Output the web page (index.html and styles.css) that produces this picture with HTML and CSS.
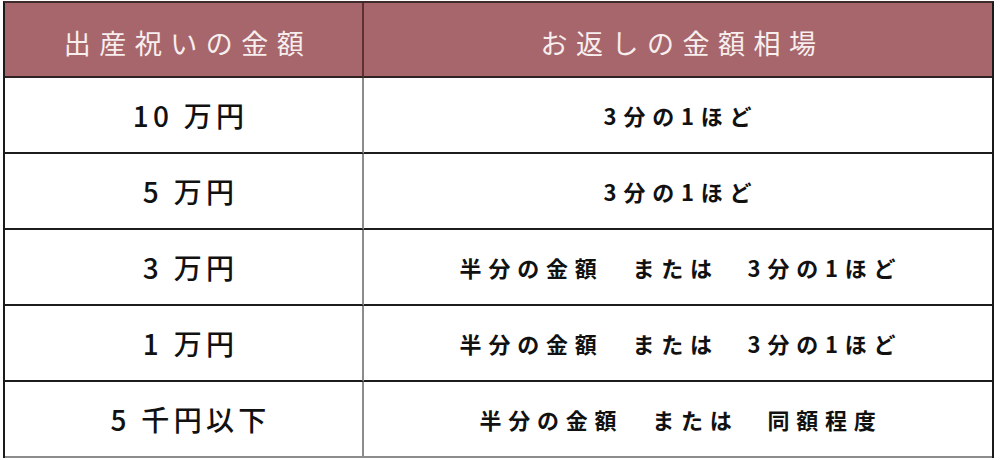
FILE: index.html
```html
<!DOCTYPE html>
<html lang="ja">
<head>
<meta charset="utf-8">
<link rel="stylesheet" href="styles.css">
</head>
<body>
<div class="table">
  <div class="cell head left">出産祝いの金額</div>
  <div class="cell head">お返しの金額相場</div>

  <div class="cell amount left">10 万円</div>
  <div class="cell ret">3分の1ほど</div>

  <div class="cell amount left">5 万円</div>
  <div class="cell ret">3分の1ほど</div>

  <div class="cell amount left">3 万円</div>
  <div class="cell ret">半分の金額　または　3分の1ほど</div>

  <div class="cell amount left">1 万円</div>
  <div class="cell ret">半分の金額　または　3分の1ほど</div>

  <div class="cell amount left last">5 千円以下</div>
  <div class="cell ret last">半分の金額　または　同額程度</div>
</div>
</body>
</html>
```
FILE: styles.css
```css
html, body {
  margin: 0;
  padding: 0;
  background: #ffffff;
}

body {
  font-family: "Noto Sans CJK JP", "Noto Sans", sans-serif;
}

.table {
  display: grid;
  grid-template-columns: 359px 1fr;
  grid-template-rows: 75px repeat(5, 76px);
  width: 991px;
  margin: 1px 0 0 3px;
  box-sizing: border-box;
  border-top: 2px solid #3e2a2b;
  border-left: 2px solid #1a1a1a;
  border-right: 2px solid #1a1a1a;
}

.cell {
  display: flex;
  align-items: center;
  justify-content: center;
  box-sizing: border-box;
  border-bottom: 2px solid #1c1c1c;
  white-space: pre;
}

.left {
  border-right: 2px solid #8c8c8c;
}

.head {
  background: #a7666b;
  color: #f7eeee;
  font-size: 27px;
  font-weight: 400;
  letter-spacing: 8.5px;
  padding: 6px 0 0 9px;
  border-bottom: 2px solid #2e2222;
}

.head.left {
  border-right: 2px solid #5b3133;
}

.amount {
  color: #111111;
  font-size: 28px;
  font-weight: 500;
  letter-spacing: 4.3px;
  padding-left: 14px;
}

.ret {
  color: #111111;
  font-size: 22px;
  font-weight: 700;
  letter-spacing: 6.8px;
  padding-left: 6px;
}

.last {
  border-bottom: 2px solid #8c8c8c;
}
```
